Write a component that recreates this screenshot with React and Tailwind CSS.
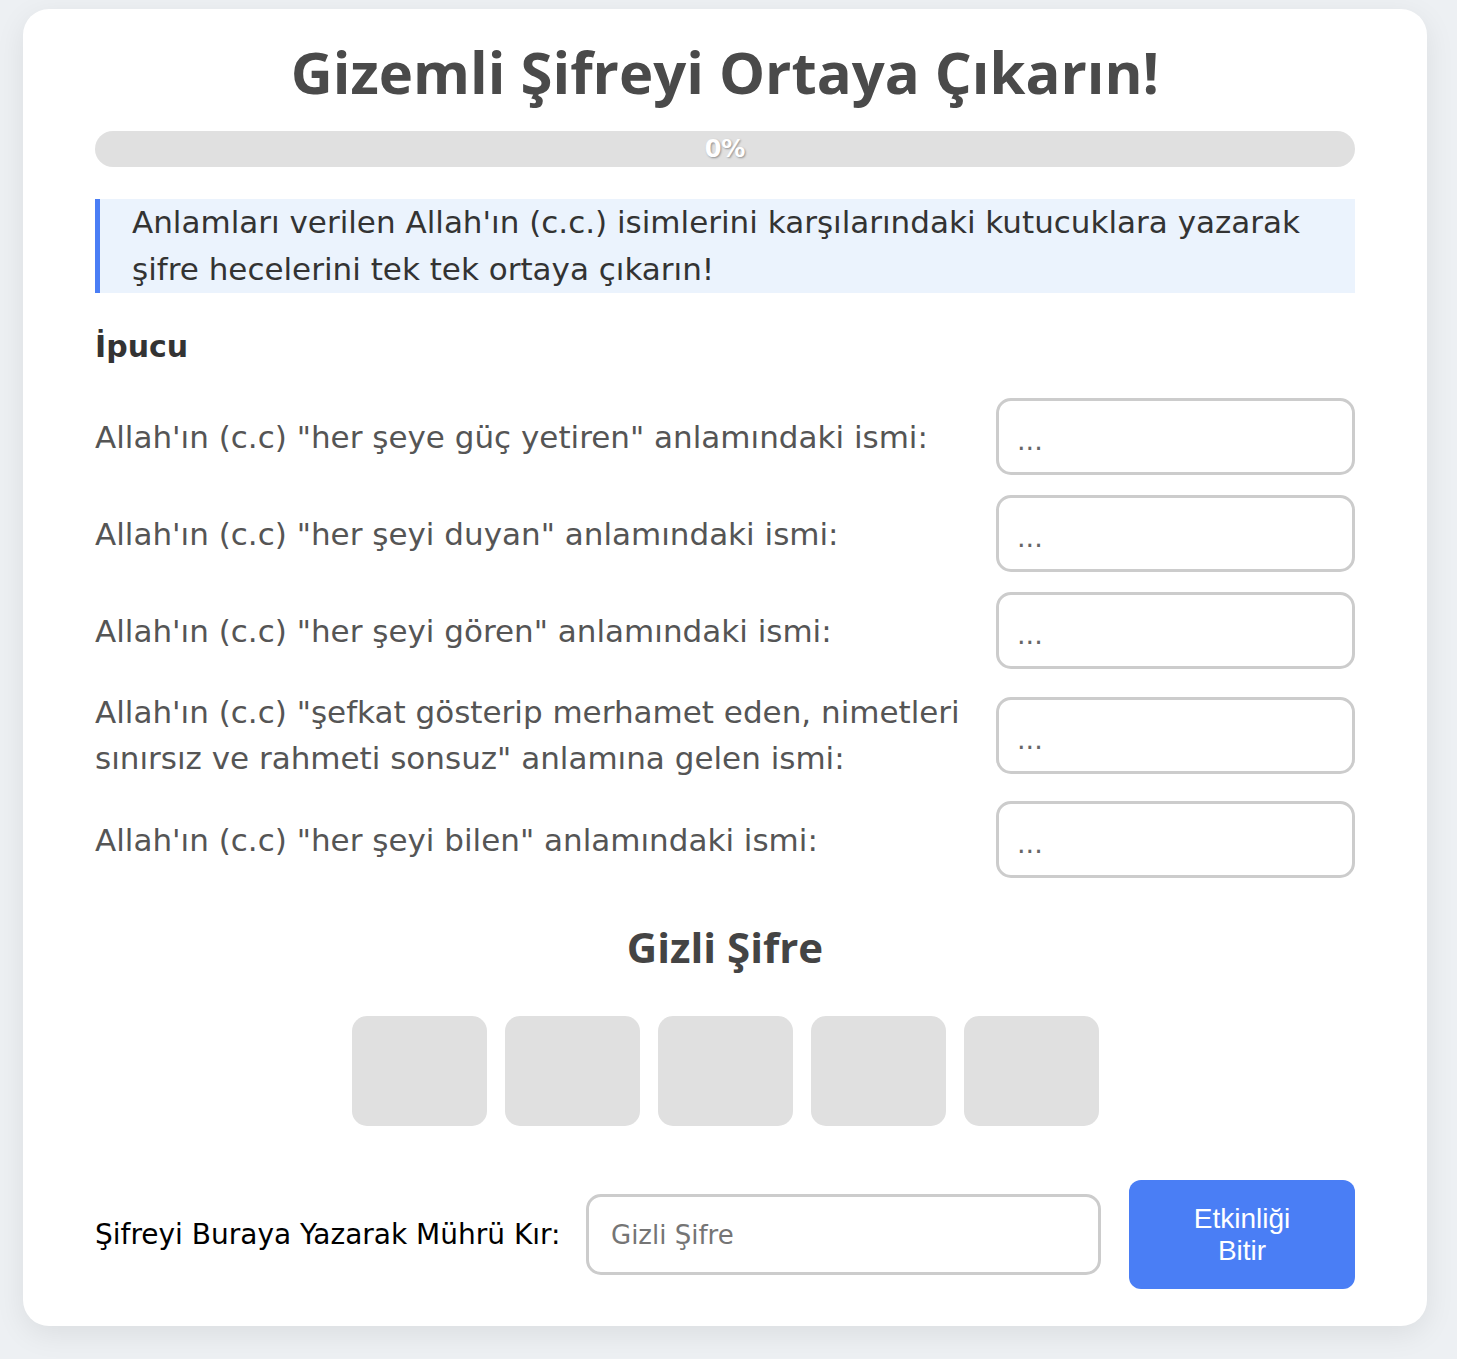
import React from 'react';

const CLUES = [
  { id: 1, text: <>Allah'ın (c.c) "her şeye güç yetiren" anlamındaki ismi:</> },
  { id: 2, text: <>Allah'ın (c.c) "her şeyi duyan" anlamındaki ismi:</> },
  { id: 3, text: <>Allah'ın (c.c) "her şeyi gören" anlamındaki ismi:</> },
  { id: 4, text: <>Allah'ın (c.c) "şefkat gösterip merhamet eden, nimetleri<br />sınırsız ve rahmeti sonsuz" anlamına gelen ismi:</> },
  { id: 5, text: <>Allah'ın (c.c) "her şeyi bilen" anlamındaki ismi:</> },
];

const SANS = "font-['DejaVu_Sans',sans-serif]";
const HEAD = "font-['Open_Sans',sans-serif] font-bold";

export default function App() {
  return (
    <div className={`min-h-screen bg-[#edf0f3] pl-[23px] pr-[30px] pt-[9px] pb-[34px] ${SANS}`}>
      <div className="bg-white rounded-[26px] shadow-[0_8px_30px_rgba(0,0,0,0.08)] px-[72px] pt-[28px] pb-[37px]">
        {/* Title */}
        <h1 className={`text-center text-[58px] leading-[70px] text-[#4a4a4a] ${HEAD}`}>
          Gizemli Şifreyi Ortaya Çıkarın!
        </h1>

        {/* Progress */}
        <div className="mt-[24px] h-[36px] rounded-full bg-[#e0e0e0] flex items-center justify-center">
          <span className="text-white font-bold text-[24px] leading-none [text-shadow:1px_1px_2px_rgba(0,0,0,0.35)]">0%</span>
        </div>

        {/* Info */}
        <div className="mt-[32px] bg-[#ebf3fd] border-l-[5px] border-[#4a7ef5] pl-[32px] pr-4 text-[31px] leading-[47px] text-[#333]">
          Anlamları verilen Allah'ın (c.c.) isimlerini karşılarındaki kutucuklara yazarak<br />
          şifre hecelerini tek tek ortaya çıkarın!
        </div>

        <h2 className="mt-[36px] text-[30px] leading-[36px] font-bold text-[#333]">İpucu</h2>

        {/* Clues */}
        <div className="mt-[33px] flex flex-col gap-[20px]">
          {CLUES.map(c => (
            <div key={c.id} className="flex items-center">
              <p className="flex-1 pr-[16px] text-[31px] leading-[46px] text-[#555]">{c.text}</p>
              <input
                placeholder="..."
                className="w-[359px] h-[77px] border-[3px] border-[#cccccc] rounded-[15px] px-[18px] pt-[8px] text-[27px] placeholder:text-[#666] outline-none"
              />
            </div>
          ))}
        </div>

        {/* Hidden password */}
        <h2 className={`mt-[45px] text-center text-[42px] leading-[48px] text-[#444] ${HEAD}`}>Gizli Şifre</h2>
        <div className="mt-[45px] flex justify-center gap-[18px]">
          {[0, 1, 2, 3, 4].map(i => (
            <div key={i} className="w-[135px] h-[110px] rounded-[15px] bg-[#e0e0e0]" />
          ))}
        </div>

        {/* Answer */}
        <div className="mt-[54px] flex items-center">
          <label className="flex-1 text-[28px] text-black whitespace-nowrap">Şifreyi Buraya Yazarak Mührü Kır:</label>
          <input
            placeholder="Gizli Şifre"
            className="w-[515px] h-[81px] border-[3px] border-[#cccccc] rounded-[15px] px-[22px] text-[26px] placeholder:text-[#757575] outline-none"
          />
          <button className="ml-[28px] w-[226px] h-[109px] rounded-[12px] bg-[#4a7ef5] text-white text-[28px] leading-[32px] font-['Liberation_Sans',sans-serif] px-[50px]">
            Etkinliği Bitir
          </button>
        </div>
      </div>
    </div>
  );
}
